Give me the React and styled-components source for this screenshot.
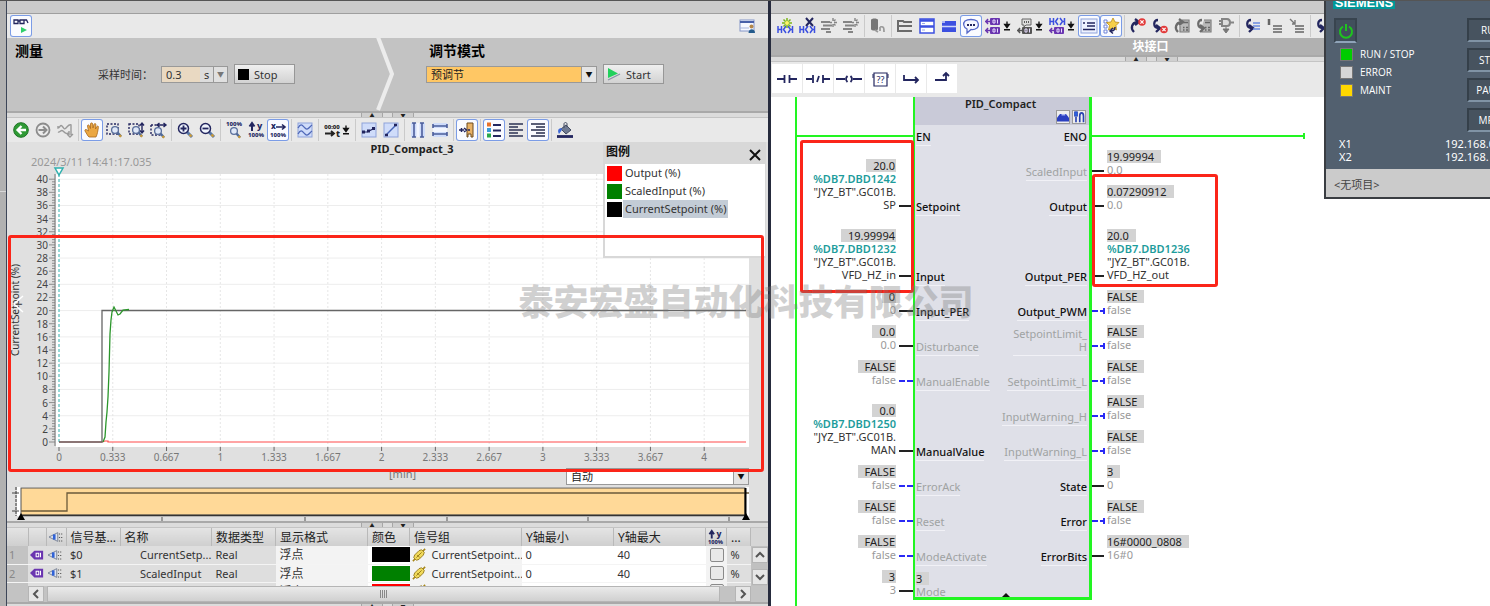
import React from 'react'
import styled, { createGlobalStyle, css } from 'styled-components'

const NAVY = '#23265f'
const GREY = '#858585'
const BLUE = '#3c50e0'
const PURPLE = '#6a35b0'

/* ---------- toolbar icons ---------- */

const Magnifier = ({ x = 8, y = 8 }) => (
  <g>
    <path d={`M${x + 2.5} ${y + 2.5}l3.5 4`} stroke="#4e6a9a" strokeWidth="2.4" />
    <path d={`M${x + 4.5} ${y + 5}l1.6 1.8`} stroke="#c99a3a" strokeWidth="2.2" />
    <circle cx={x} cy={y} r="3.4" fill="#dfe8f8" stroke="#5a6f9c" strokeWidth="1.3" />
  </g>
)
const Contact = ({ color = BLUE, y = 0 }) => (
  <path d={`M1 ${8 + y}v7M1 ${11.5 + y}h3M4.500 ${8 + y}v7M9 ${8 + y}l-2.500 3.500l2.500 3.500M11 ${8 + y}l2.500 3.500l-2.500 3.500M13 ${11.5 + y}h2M15.500 ${8 + y}v7`} stroke={color} strokeWidth="1.5" fill="none" />
)
const Percent = ({ y = 15 }) => (
  <text x="8" y={y} fontSize="6" fontWeight="800" fill={NAVY} textAnchor="middle">100%</text>
)
const GreyList = ({ x = 6, y = 7 }) => (
  <path d={`M${x} ${y}h9M${x} ${y + 3}h9M${x} ${y + 6}h9`} stroke={GREY} strokeWidth="1.8" />
)
const Hook = ({ color = NAVY, up }) => (
  <path d={up ? 'M4 14C0 10 2 5 7 4M5 1l4 3-4 3' : 'M6 2C1 2 1 9 6 10M4 7l4 3-4 4'} stroke={color} strokeWidth="2.3" fill="none" />
)
const Device = () => (
  <g>
    <path d="M8 2h7v12H6V8" fill="#b9b9b9" stroke="#7d7d7d" strokeWidth="1.2" />
    <path d="M9 4.5h5M9 12h1.5M12 12h2M9 9.500h1.5M12 9.500h2" stroke="#666" strokeWidth="1.4" />
  </g>
)
const CrossBadge = ({ x, y }) => (
  <g>
    <circle cx={x} cy={y} r="3.8" fill="#e23a3a" />
    <path d={`M${x - 1.6} ${y - 1.6}l3.2 3.2M${x + 1.6} ${y - 1.6}l-3.2 3.2`} stroke="#fff" strokeWidth="1.2" />
  </g>
)
const Block = ({ x = 5, y, color = PURPLE }) => (
  <g>
    <rect x={x} y={y} width="10" height="7" rx="1" fill={color} />
    <path d={`M0 ${y + 3.5}h5M3 ${y + 1}L1 ${y + 3.5}l2 2.500`} stroke={color} strokeWidth="1.5" fill="none" />
    <path d={`M${x + 3} ${y + 2}h2v3h-2zM${x + 7.5} ${y + 1.5}v4`} stroke="#e8dcff" strokeWidth="1" fill="none" />
  </g>
)
const Tile = () => <rect x="1" y="1" width="14" height="14" fill="#cfdcfa" stroke="#8fa3da" />

const icons = {
  glasses: (
    <g fill="none">
      <path d="M1 2h4v3.500H1zM7 2h4v3.500H7zM5 3h2M11 2h2.500l1.500 3" stroke={NAVY} strokeWidth="1.3" />
      <path d="M8 9l6 3-6 3z" fill="#2fcf6a" />
    </g>
  ),
  layout: (
    <g>
      <rect x="1" y="2" width="14" height="11" fill="#f6f8ff" stroke="#8496c8" />
      <path d="M1 4h14" stroke="#4860a8" strokeWidth="2" />
      <path d="M1 10h9" stroke="#a8b5dc" />
      <circle cx="12.500" cy="8.500" r="2" fill="#b5884a" />
      <path d="M9.500 15c0-5 6.500-5 6.500 0z" fill="#245b8c" />
    </g>
  ),
  back: (
    <g>
      <circle cx="8" cy="8" r="7.300" fill="#2f9a35" stroke="#1d7424" />
      <path d="M13 8H5M8.500 4L4.500 8l4 4" stroke="#fff" strokeWidth="2.300" fill="none" />
    </g>
  ),
  forward: (
    <g>
      <circle cx="8" cy="8" r="6.500" fill="#ececec" stroke="#8c8c8c" strokeWidth="1.800" />
      <path d="M3.500 8h8M8 4.500L11.500 8 8 11.500" stroke="#8c8c8c" strokeWidth="2" fill="none" />
    </g>
  ),
  curve: (
    <g fill="none" stroke="#999" strokeWidth="1.400">
      <path d="M1 4v2c2 0 2-4 4-2s2 4 4 2 3-4 5-3v6" />
      <path d="M1 10c2 1 3-3 5-1s3 3 6 2M12 9v4M14 9v4M10 12l3 3 3-3" />
    </g>
  ),
  hand: (
    <path d="M4 14L1 9c-.6-1.600 1-2 2-1l1.500 1L3.500 4c0-1.500 1.500-1.500 2 0l1 2.500L6.500 2c0-1.500 2-1.500 2.200 0L9 6l1-3.600c.5-1.400 2-1 1.900.4L11.500 7l1.200-2.300c.8-1.200 2-.6 1.700.7C13.800 9 13.500 12 12 15H5z" fill="#eba742" stroke="#a8681c" strokeWidth=".8" />
  ),
  zoomArea: (
    <g>
      <rect x="1" y="2" width="11" height="10" fill="none" stroke={NAVY} strokeWidth="1.400" strokeDasharray="2 1.500" />
      <Magnifier x={9} y={8} />
    </g>
  ),
  zoomV: (
    <g>
      <rect x="1" y="2" width="10" height="10" fill="none" stroke={NAVY} strokeWidth="1.400" strokeDasharray="2 1.500" />
      <path d="M14 1v10M12 3.500L14 1l2 2.500M12 8.500l2 2.500 2-2.500" stroke={NAVY} strokeWidth="1.400" fill="none" />
      <Magnifier x={8} y={8} />
    </g>
  ),
  zoomH: (
    <g>
      <path d="M1 3v10h10M1 3h6" fill="none" stroke={NAVY} strokeWidth="1.400" strokeDasharray="2 1.500" />
      <path d="M7 3h9M9.500 1L7 3l2.500 2M13.500 1L16 3l-2.500 2" stroke={NAVY} strokeWidth="1.400" fill="none" />
      <Magnifier x={8} y={9} />
    </g>
  ),
  zoomIn: (
    <g>
      <path d="M10 10l5 5" stroke="#5878a8" strokeWidth="3" />
      <path d="M12.500 12.500l2 2" stroke="#c99a3a" strokeWidth="2.400" />
      <circle cx="6.500" cy="6.500" r="5" fill="#eef3fc" stroke={NAVY} strokeWidth="1.500" />
      <path d="M3.500 6.500h6M6.500 3.500v6" stroke={NAVY} strokeWidth="1.800" />
    </g>
  ),
  zoomOut: (
    <g>
      <path d="M10 10l5 5" stroke="#5878a8" strokeWidth="3" />
      <path d="M12.500 12.500l2 2" stroke="#c99a3a" strokeWidth="2.400" />
      <circle cx="6.500" cy="6.500" r="5" fill="#eef3fc" stroke={NAVY} strokeWidth="1.500" />
      <path d="M3.500 6.500h6" stroke={NAVY} strokeWidth="1.800" />
    </g>
  ),
  zoomFull: (
    <g>
      <Magnifier x={8} y={9} />
      <Percent y={4} />
    </g>
  ),
  yFull: (
    <g>
      <path d="M4 9V2M1.500 4.500L4 1l2.500 3.500" stroke={NAVY} strokeWidth="2" fill="none" />
      <text x="9" y="7" fontSize="9" fontWeight="800" fill={NAVY}>y</text>
      <Percent y={15} />
    </g>
  ),
  xFull: (
    <g>
      <text x="1" y="7" fontSize="8" fontWeight="800" fill={NAVY}>x</text>
      <path d="M6 5h9M12 2.500L15 5l-3 2.500" stroke={NAVY} strokeWidth="1.600" fill="none" />
      <Percent y={15} />
    </g>
  ),
  waves: (
    <g>
      <Tile />
      <path d="M1 6c3-5 4-3 7 0s4-1 7-3M1 12c3-5 4-3 7 0s4-1 7-3" stroke="#4f68b8" strokeWidth="1.300" fill="none" />
    </g>
  ),
  time: (
    <g>
      <text x="8" y="7" fontSize="6" fontWeight="800" fill="#222" textAnchor="middle">00:00</text>
      <path d="M1 11.500h8M7 9l3 2.500L7 14" stroke="#222" strokeWidth="1.800" fill="none" />
      <text x="12" y="15" fontSize="9" fontWeight="800" fill="#222">t</text>
    </g>
  ),
  points: (
    <g>
      <Tile />
      <path d="M2 10h4l4-2 4-2" stroke={NAVY} strokeWidth="1.200" fill="none" />
      <path d="M1 10h3M6 9h3M11 6.500h3" stroke={NAVY} strokeWidth="2.800" />
    </g>
  ),
  line: (
    <g>
      <Tile />
      <path d="M3 13L13 3" stroke="#4764b8" strokeWidth="1.500" />
      <path d="M2 13h3M11 3h3" stroke={NAVY} strokeWidth="2.500" />
    </g>
  ),
  vBars: (
    <g>
      <rect x="1" y="1" width="14" height="14" fill="#cfdcfa" />
      <path d="M4 1v14M12 1v14M2 1h4M2 15h4M10 1h4M10 15h4" stroke="#4b5d9c" strokeWidth="1.600" />
      <path d="M8 1v14" stroke="#f2f5fd" strokeWidth="3" />
    </g>
  ),
  hBars: (
    <g>
      <rect x="1" y="1" width="14" height="14" fill="#cfdcfa" />
      <path d="M1 8h14" stroke="#f2f5fd" strokeWidth="4" />
      <path d="M1 4h14M1 12h14M1 2v4M15 2v4M1 10v4M15 10v4" stroke="#4b5d9c" strokeWidth="1.600" />
    </g>
  ),
  dock: (
    <g>
      <path d="M8 1h6v14h-2v-3H9v3H8z" fill="#e8b266" stroke="#6d4a1e" />
      <path d="M0 8h5M2.500 6v4M5 6l2.500 2L5 10M9 8h2" stroke={NAVY} strokeWidth="1.500" fill="none" />
    </g>
  ),
  legend: (
    <g>
      <path d="M1 0.500h4v4H1z" fill="#e8722a" />
      <path d="M1 6h4v4H1z" fill="#3a9ad8" />
      <path d="M1 11.500h4v4H1z" fill="#2aa84a" />
      <path d="M7 3h8M7 8.500h8M7 14h8" stroke={NAVY} strokeWidth="2.200" />
    </g>
  ),
  alignLeft: <path d="M1 2h14M1 5h9M1 8h14M1 11h9M1 14h14" stroke="#5a5f78" strokeWidth="1.800" />,
  alignRight: <path d="M1 2h14M6 5h9M1 8h14M6 11h9M1 14h14" stroke="#5a5f78" strokeWidth="1.800" />,
  paint: (
    <g>
      <path d="M0 14.500h16" stroke={NAVY} strokeWidth="2.800" />
      <path d="M4 7l5-4 5 5-5 4z" fill="#6f7a92" stroke="#444c62" />
      <path d="M7 6V2c0-2 3-2 3 0v3" stroke="#444c62" fill="none" />
      <path d="M4 6c-4 1-3 4-2 6 1-2 3-3 3-5z" fill="#3d68d8" />
    </g>
  ),
  newNet: (
    <g>
      <Contact />
      <path d="M10 0v10M5 5h10M6.500 1.500l7 7M13.500 1.500l-7 7" stroke="#7bb518" strokeWidth="1.500" />
      <circle cx="10" cy="5" r="2" fill="#fff36b" />
    </g>
  ),
  delNet: (
    <g>
      <Contact />
      <path d="M7 0l7 8M14 0L7 8" stroke={NAVY} strokeWidth="2" />
    </g>
  ),
  greyRows: (
    <g>
      <path d="M0 4h9M2 7.500h9M0 11h9M5 14h5" stroke={GREY} strokeWidth="2" />
      <path d="M12 0v3M12 6v3M9 4.500h2M13 4.500h3M14.500 1.500l-1.500 1.500M14.500 7.500L13 6" stroke={GREY} strokeWidth="1.400" />
    </g>
  ),
  tank: (
    <g>
      <path d="M1 2c0-2 7-2 7 0v9c0 2-7 2-7 0z" fill="#777" />
      <path d="M10 9v4M10 9c4-1 4 1 4 5M5 12l3 2" stroke="#999" strokeWidth="1.700" fill="none" />
    </g>
  ),
  tree: <path d="M0 3h6l1 1h8M0 8h15M0 13h15M1 2v12" stroke="#6b6b6b" strokeWidth="2" fill="none" />,
  network: (
    <g>
      <rect x="1" y="1" width="14" height="14" fill="#fff" stroke={BLUE} strokeWidth="1.500" />
      <path d="M1 2.500h14M1 8.500h14" stroke={BLUE} strokeWidth="2.500" />
      <path d="M3 5.500h3M3 12h3" stroke="#9aa7ea" />
    </g>
  ),
  networkFull: (
    <g>
      <rect x="1" y="3" width="14" height="11" fill={BLUE} />
      <path d="M1 4h3M1 8.500h14" stroke="#cfd6fa" strokeWidth="1.400" />
    </g>
  ),
  comment: (
    <g>
      <path d="M2 3c3-2 9-2 12 0 2 3 2 5 0 7-2 1.500-4 2-6 1.500L4 15v-4C0 9 0 5 2 3z" fill="#f5f7ff" stroke="#5668c8" strokeWidth="1.300" />
      <path d="M4 7h2M7 7h2M10 7h2" stroke={NAVY} strokeWidth="1.800" />
    </g>
  ),
  operands: (
    <g>
      <Block y={0} />
      <Block y={9} />
    </g>
  ),
  tagComment: (
    <g>
      <Block y={9} color="#555" />
      <path d="M5 1h9v6H9l-2 2V7H5z" fill="#ddd" stroke="#666" />
      <path d="M7 4h1M9 4h1M11 4h1" stroke="#333" strokeWidth="1.500" />
    </g>
  ),
  netBlock: (
    <g>
      <Contact y={-8} />
      <Block y={9} />
    </g>
  ),
  caret: <path d="M4 2v7M1 6l3 4 3-4zM0 13h8" stroke="#111" strokeWidth="1.800" fill="#111" />,
  indent: (
    <g>
      <rect x="0" y="1" width="16" height="14" fill="#eef2ff" stroke="#8fa3da" />
      <path d="M2 5h2M6 5h8M6 8h8M2 11.500h12" stroke={NAVY} strokeWidth="1.700" />
    </g>
  ),
  favorites: (
    <g>
      <path d="M1 2h3v3H1zM1 7h3v3H1zM1 12h3v3H1z" fill="#fff" stroke="#6c82d8" />
      <path d="M10 0l2 4 4 .5-3 3 .5 4.500-4-2-4 2 1-4.500-3-3 4.500-.5z" fill="#f6cf4a" stroke="#b98a1a" strokeWidth=".8" />
      <path d="M12 9c0 3-1 4-4 4M10 10l-3 3 3 2.500" stroke={NAVY} strokeWidth="1.500" fill="none" />
    </g>
  ),
  goUp: <g><Hook up /><CrossBadge x={12} y={4} /></g>,
  goDown: <g><Hook /><CrossBadge x={12} y={11.5} /></g>,
  devUp: <g><Device /><Hook up color="#6b6b6b" /></g>,
  devDown: <g><Device /><Hook color="#6b6b6b" /></g>,
  gate: (
    <g>
      <path d="M4 1h5c4 0 4 7 0 7H4zM1 3h3M1 6h3M12 4.500h4" fill="#ddd" stroke={GREY} strokeWidth="2" />
      <path d="M8 9v4M5 11l3 4 3-4z" stroke="#777" fill="#777" />
    </g>
  ),
  stepBlue: (
    <g>
      <Hook />
      <path d="M8 5h7M8 8h7M8 11h7" stroke="#6a8ae0" strokeWidth="1.700" />
    </g>
  ),
  stepGrey: <g><path d="M2 1v6" stroke="#666" strokeWidth="2.500" /><GreyList x={6} y={8} /></g>,
  stepOut: <g><path d="M1 1l5 5M3 6h3V2" stroke="#777" strokeWidth="1.400" fill="none" /><GreyList x={6} y={8} /></g>,
  eye: (
    <g>
      <path d="M0 8l10-5v10z" fill="#dfe4ee" stroke="#707a90" />
      <path d="M6 5v6" stroke="#2f62d8" strokeWidth="3" />
      <path d="M12 4v1M12 8v1M12 12v1M14.500 4v1M14.500 8v1M14.500 12v1" stroke="#555" strokeWidth="1.300" />
    </g>
  ),
  tag: (
    <g>
      <path d="M0 8l5-5h10v10H5z" fill={PURPLE} />
      <path d="M7 6h3v4H7zM12 5.500v5" stroke="#fff" strokeWidth="1.200" fill="none" />
    </g>
  ),
  link: (
    <g fill="none">
      <path d="M1 15l3-3M12 4l3-3" stroke="#a88718" strokeWidth="1.800" />
      <path d="M3 8l5-5 3-1 3 3-1 3-5 5-3 1-3-3z" fill="#f1da5a" stroke="#8f7215" />
      <path d="M5 11l6-6M6 8l3 3" stroke="#8f7215" />
    </g>
  ),
  toolbox: (
    <g>
      <path d="M0 9l4-5h8l4 5v5H0z" fill="#2a3fc0" />
      <path d="M6 5h5" stroke="#b6c2f8" strokeWidth="1.800" />
    </g>
  ),
  wrench: (
    <g>
      <path d="M2 1h4v6H2z" fill="#2a62e0" stroke="#2a42b0" />
      <path d="M4 8v7M9 15V7c0-6 5-6 5 0v8" stroke="#2a42b0" strokeWidth="2.200" fill="none" />
    </g>
  ),
  power: (
    <g fill="none" stroke="#1fc41f" strokeWidth="2">
      <path d="M5 3.500a6 6 0 1 0 6 0M8 1v7" />
    </g>
  ),
}

const Icon = ({ name, size = 16, width }) => (
  <svg width={width || size} height={size} viewBox={`0 0 ${name === 'caret' ? 8 : 16} 16`} aria-hidden="true">
    {icons[name]}
  </svg>
)

/* ---------- data ---------- */

const chartTools = [
  'back', 'forward', 'curve', '|', '*hand', 'zoomArea', 'zoomV', 'zoomH', '|', 'zoomIn', 'zoomOut', '|',
  'zoomFull', 'yFull', '*xFull', '|', 'waves', '|', '+time', '|', 'points', 'line', '|', 'vBars', 'hBars', '|',
  '*dock', '|', '*legend', 'alignLeft', '*alignRight', '|', 'paint',
]
const editorTools = [
  'newNet', 'delNet', 'greyRows', 'greyRows', '|', 'tank', '|', 'tree', 'network', 'networkFull', '*comment',
  '+operands', '+tagComment', '+netBlock', '*indent', '*favorites', '|', 'goUp', 'goDown', 'devUp', 'devDown',
  'gate', '|', 'stepBlue', 'stepGrey', 'stepOut', '|', 'stepBlue',
]

const legend = [
  { color: '#ff0000', label: 'Output (%)' },
  { color: '#008000', label: 'ScaledInput (%)' },
  { color: '#000000', label: 'CurrentSetpoint (%)', selected: true },
]

const signals = [
  { no: 1, base: '$0', name: 'CurrentSetp...', color: '#000000' },
  { no: 2, base: '$1', name: 'ScaledInput', color: '#008000' },
  { no: 3, base: '$2', name: 'Output', color: '#ff0000' },
]

const inputs = [
  { name: 'EN', power: true, on: true },
  { name: 'Setpoint', tall: true, on: true, value: '20.0', address: '%DB7.DBD1242', tag: ['"JYZ_BT".GC01B.', 'SP'] },
  { name: 'Input', tall: true, on: true, value: '19.99994', address: '%DB7.DBD1232', tag: ['"JYZ_BT".GC01B.', 'VFD_HZ_in'] },
  { name: 'Input_PER', on: true, value: '0', initial: '0' },
  { name: 'Disturbance', value: '0.0', initial: '0.0' },
  { name: 'ManualEnable', value: 'FALSE', initial: 'false', bool: true },
  { name: 'ManualValue', tall: true, on: true, value: '0.0', address: '%DB7.DBD1250', tag: ['"JYZ_BT".GC01B.', 'MAN'] },
  { name: 'ErrorAck', value: 'FALSE', initial: 'false', bool: true },
  { name: 'Reset', value: 'FALSE', initial: 'false', bool: true },
  { name: 'ModeActivate', value: 'FALSE', initial: 'false', bool: true },
  { name: 'Mode', value: '3', initial: '3', inner: '3' },
]
const outputs = [
  { name: 'ENO', power: true, on: true },
  { name: 'ScaledInput', value: '19.99994', initial: '0.0' },
  { name: 'Output', on: true, value: '0.07290912', initial: '0.0' },
  { name: 'Output_PER', tall: true, on: true, value: '20.0', address: '%DB7.DBD1236', tag: ['"JYZ_BT".GC01B.', 'VFD_HZ_out'] },
  { name: 'Output_PWM', on: true, value: 'FALSE', initial: 'false', bool: true },
  { name: 'SetpointLimit_\nH', value: 'FALSE', initial: 'false', bool: true },
  { name: 'SetpointLimit_L', value: 'FALSE', initial: 'false', bool: true },
  { name: 'InputWarning_H', value: 'FALSE', initial: 'false', bool: true },
  { name: 'InputWarning_L', value: 'FALSE', initial: 'false', bool: true },
  { name: 'State', on: true, value: '3', initial: '0' },
  { name: 'Error', on: true, value: 'FALSE', initial: 'false', bool: true },
  { name: 'ErrorBits', on: true, value: '16#0000_0808', initial: '16#0' },
]

const ladder = [
  { label: 'normally open contact', d: 'M1 8h7M8.500 4v8M13.500 4v8M14 8h7' },
  { label: 'normally closed contact', d: 'M-1 8h6M6 4v8M16 4v8M16 8h7M10 11l2-6' },
  { label: 'assignment', d: 'M-2 8h9M9.500 5q-3 3 0 6M12.500 5q3 3 0 6M15 8h9' },
  { label: 'empty box', d: 'M5 2h13v13H5zM3 4h2M18 4h2M3 6h2M18 6h2', text: '??' },
  { label: 'open branch', d: 'M4 4v5h14M15 6l3 3-3 3' },
  { label: 'close branch', d: 'M4 9h11V3M12 5l3-3 3 3' },
]

/* ---------- pieces ---------- */

const Toolbar = ({ items }) => (
  <ToolRow>
    {items.map((item, i) => {
      if (item === '|') return <Separator key={i} />
      const name = item.replace(/[*+]/, '')
      return (
        <ToolButton key={i} aria-label={name} $active={item[0] === '*'} $wide={item[0] === '+'}>
          <Icon name={name} />
          {item[0] === '+' && <Icon name="caret" size={12} width={8} />}
        </ToolButton>
      )
    })}
  </ToolRow>
)

const Splitter = ({ offset }) => (
  <SplitterBar $offset={offset}>
    <SplitterGrip aria-label="collapse up">▲</SplitterGrip>
    <SplitterGrip aria-label="collapse down">▼</SplitterGrip>
  </SplitterBar>
)

// 0..40 % over 263px, one minute is 161px wide
const yPos = (v) => 268 - v * 6.57
const xPos = (v) => 52 + v * 161.3

const TrendChart = () => {
  const xTicks = ['0', '0.333', '0.667', '1', '1.333', '1.667', '2', '2.333', '2.667', '3', '3.333', '3.667', '4']
  return (
    <ChartSvg viewBox="0 0 761 294">
      <rect x="49" y="0" width="693" height="273" fill="#fff" />
      {[4, 8, 12, 16, 20, 24, 28, 32, 36, 40].map((v) => (
        <path key={v} d={`M52 ${yPos(v)}H742`} stroke="#ededed" />
      ))}
      {xTicks.map((t, i) => (
        <g key={t}>
          {i > 0 && <path d={`M${xPos(i / 3)} 0V273`} stroke="#e6e6e6" strokeDasharray="2 2" />}
          <path d={`M${xPos(i / 3)} 273v4`} stroke="#666" />
          <text x={xPos(i / 3)} y="287" textAnchor="middle" fill="#777">{t}</text>
        </g>
      ))}
      {Array.from({ length: 101 }, (_, i) => (
        <path key={i} d={`M${i % 5 ? 45 : 42} ${yPos(i * 0.4)}H48`} stroke="#777" strokeWidth=".8" />
      ))}
      <path d="M48 0V272" stroke="#777" />
      {Array.from({ length: 21 }, (_, i) => (
        <text key={i} x="41" y={yPos(i * 2) + 4} textAnchor="end" fill="#444">{i * 2}</text>
      ))}
      <text transform="translate(12 136) rotate(-90)" textAnchor="middle" fill="#333">CurrentSetpoint (%)</text>
      <path d="M52 0V268" stroke="#2fb0ae" strokeDasharray="3 2" />
      <path d="M48-6h8l-4 7z" fill="#fff" stroke="#2fb0ae" strokeWidth="1.500" />
      <path d="M52 268h43l3-1h3v1h638" stroke="#ff4a4a" strokeWidth="1.200" fill="none" />
      <path d="M52 268h43V136.500h644" stroke="#666" strokeWidth="1.300" fill="none" />
      <path d="M96 268l2-5 1-15 1-10 1-15 1-25 1-38 1-14 1-8 2-5 4 8 2-1 3-4 6-.5" stroke="#2b962b" strokeWidth="1.300" fill="none" />
    </ChartSvg>
  )
}

const Overview = () => (
  <ChartSvg viewBox="0 0 761 37">
    <rect x="10" y="3" width="732" height="29" fill="#fff" />
    <path d="M9 3v29" stroke="#333" strokeDasharray="3 1" />
    <path d="M5 9h7M5 27h7" stroke="#444" />
    <rect x="14" y="4" width="724" height="27" fill="#ffd998" stroke="#555" />
    {[155, 298, 440, 581, 722].map((x) => (
      <path key={x} d={`M${x} 33v4`} stroke="#555" />
    ))}
    <path d="M14 27h46V9h682" stroke="#6b5a3a" strokeWidth="1.300" fill="none" />
    <path d="M14 31.500h724" stroke="#333" strokeWidth="1.500" />
    <path d="M738.500 4v30" stroke="#000" strokeWidth="2" />
    <path d="M10 36l4-7 4 7zM735 36l4-7 4 7z" fill="#000" />
  </ChartSvg>
)

const Pin = ({ pin, side }) => {
  if (pin.power) {
    return (
      <PinRow $side={side}>
        <PowerWire $side={side} />
      </PinRow>
    )
  }
  return (
    <PinRow $tall={pin.tall} $side={side}>
      <PinText $side={side}>
        <Monitor $side={side}>{pin.value}</Monitor>
        {pin.address && <Address>{pin.address}</Address>}
        {pin.tag && pin.tag.map((t) => <Operand key={t}>{t}</Operand>)}
        {pin.initial && <Initial>{pin.initial}</Initial>}
      </PinText>
      <Wire $bool={pin.bool} $side={side} />
    </PinRow>
  )
}

const PinName = ({ pin, side }) => (
  <NameRow $tall={pin.tall} $side={side} $first={pin.power}>
    {pin.inner && <Monitor>{pin.inner}</Monitor>}
    <Name $on={pin.on} $side={side}>{pin.name}</Name>
  </NameRow>
)

const App = () => {
  return (
    <Page>
      <GlobalStyle />
      <SideStrip />
      <CommissioningPanel>
        <TitleBar />
        <ActionBar>
          <ToolButton $active aria-label="monitor"><Icon name="glasses" /></ToolButton>
          <ToolButton aria-label="save layout"><Icon name="layout" /></ToolButton>
        </ActionBar>
        <Controls>
          <ControlGroup>
            <GroupTitle>测量</GroupTitle>
            <ControlRow $indent>
              <label htmlFor="sampling">采样时间：</label>
              <SampleField>
                <input id="sampling" defaultValue="0.3" />
                <span>s</span>
                <button aria-label="choose time">▼</button>
              </SampleField>
              <CommandButton>
                <StopMark />
                Stop
              </CommandButton>
            </ControlRow>
          </ControlGroup>
          <Chevron viewBox="0 0 26 73" aria-hidden="true">
            <path d="M3-1l14 37L3 72" stroke="#ececec" strokeWidth="4" fill="none" />
          </Chevron>
          <ControlGroup $fill>
            <GroupTitle>调节模式</GroupTitle>
            <ControlRow>
              <SelectBox $mode>
                <select aria-label="调节模式">
                  <option>预调节</option>
                </select>
              </SelectBox>
              <CommandButton>
                <svg width="14" height="14" viewBox="0 0 14 14" aria-hidden="true">
                  <path d="M1 1l10 5.500L1 11z" fill="#22d05c" />
                  <path d="M1 13l12-6" stroke="#8a94a8" strokeWidth="1.300" />
                </svg>
                Start
              </CommandButton>
            </ControlRow>
          </ControlGroup>
        </Controls>
        <Splitter offset={354} />
        <Toolbar items={chartTools} />
        <ChartArea>
          <ChartHead>
            <ChartTitle>PID_Compact_3</ChartTitle>
            <TimeStamp>2024/3/11 14:41:17.035</TimeStamp>
          </ChartHead>
          <TrendChart />
          <AxisFooter>
            <AxisUnit>[min]</AxisUnit>
            <SelectBox>
              <select aria-label="scaling">
                <option>自动</option>
              </select>
            </SelectBox>
          </AxisFooter>
          <Overview />
          <Legend>
            <LegendHead>
              图例
              <button aria-label="close">
                <svg width="12" height="12" viewBox="0 0 12 12">
                  <path d="M1 1l10 10M11 1L1 11" stroke="#111" strokeWidth="2" />
                </svg>
              </button>
            </LegendHead>
            <LegendList>
              {legend.map((item) => (
                <LegendItem key={item.label} $color={item.color} $selected={item.selected}>
                  <span>{item.label}</span>
                </LegendItem>
              ))}
            </LegendList>
          </Legend>
          <Highlight $top={93} $left={1} $right={4} $height={237} />
          <PrevArrow viewBox="0 0 12 18" aria-hidden="true">
            <path d="M11 1L2 9l9 8" stroke="#fff" strokeWidth="1.500" fill="none" />
          </PrevArrow>
        </ChartArea>
        <Splitter offset={354} />
        <TableArea>
          <TableClip>
            <SignalTable>
              <colgroup>
                {[21, 18, 20, 54, null, 64, 92, 42, 112, 92, 92, 21, 24].map((w, i) => (
                  <col key={i} width={w || undefined} />
                ))}
              </colgroup>
              <thead>
                <tr>
                  <th />
                  <th />
                  <th><Icon name="eye" size={14} /></th>
                  <th>信号基…</th>
                  <th>名称</th>
                  <th>数据类型</th>
                  <th>显示格式</th>
                  <th>颜色</th>
                  <th>信号组</th>
                  <th>Y轴最小</th>
                  <th>Y轴最大</th>
                  <th><Icon name="yFull" size={15} /></th>
                  <th>...</th>
                </tr>
              </thead>
              <tbody>
                {signals.map((s) => (
                  <tr key={s.no}>
                    <RowNo>{s.no}</RowNo>
                    <td><Icon name="tag" size={14} /></td>
                    <td><Icon name="eye" size={14} /></td>
                    <td>{s.base}</td>
                    <NameCell>{s.name}</NameCell>
                    <td>Real</td>
                    <EditCell $cjk>浮点</EditCell>
                    <ColorCell $color={s.color}><div /></ColorCell>
                    <EditCell>
                      <GroupLabel><Icon name="link" size={14} />CurrentSetpoint...</GroupLabel>
                    </EditCell>
                    <EditCell $white>0</EditCell>
                    <EditCell $white>40</EditCell>
                    <EditCell><input type="checkbox" aria-label={`${s.name} 100%`} /></EditCell>
                    <td>%</td>
                  </tr>
                ))}
              </tbody>
            </SignalTable>
          </TableClip>
          <VScroll>
            <ScrollButton aria-label="scroll up"><svg viewBox="0 0 10 10"><path d="M1 7l4-4 4 4" /></svg></ScrollButton>
            <ScrollButton aria-label="scroll down"><svg viewBox="0 0 10 10"><path d="M1 3l4 4 4-4" /></svg></ScrollButton>
          </VScroll>
        </TableArea>
        <HScroll>
          <ScrollButton aria-label="scroll left"><svg viewBox="0 0 10 10"><path d="M7 1L3 5l4 4" /></svg></ScrollButton>
          <Thumb><i /><i /><i /><i /></Thumb>
          <ScrollButton aria-label="scroll right"><svg viewBox="0 0 10 10"><path d="M3 1l4 4-4 4" /></svg></ScrollButton>
        </HScroll>
        <Splitter offset={354} />
      </CommissioningPanel>

      <EditorPanel>
        <TitleBar />
        <Toolbar items={editorTools} />
        <InterfaceBar>块接口</InterfaceBar>
        <Splitter offset={354} />
        <Palette>
          {ladder.map((item) => (
            <PaletteButton key={item.label} aria-label={item.label}>
              <svg width="24" height="16" viewBox="-1 0 24 16">
                <path d={item.d} stroke={NAVY} strokeWidth={item.text ? 1.2 : 1.8} fill="none" />
                {item.text && <text x="11.5" y="12" fontSize="9" fill={NAVY} textAnchor="middle">{item.text}</text>}
              </svg>
            </PaletteButton>
          ))}
        </Palette>
        <Diagram>
          <Pins $side="left">
            {inputs.map((p) => <Pin key={p.name} pin={p} side="left" />)}
          </Pins>
          <FunctionBlock>
            <BlockHead>
              <h3>PID_Compact</h3>
              <div>
                <BlockButton aria-label="configuration"><Icon name="toolbox" size={12} /></BlockButton>
                <BlockButton aria-label="commissioning"><Icon name="wrench" size={12} /></BlockButton>
              </div>
            </BlockHead>
            <BlockBody>
              <div>{inputs.map((p) => <PinName key={p.name} pin={p} side="left" />)}</div>
              <div>{outputs.map((p) => <PinName key={p.name} pin={p} side="right" />)}</div>
              <BlockFold />
            </BlockBody>
          </FunctionBlock>
          <Pins $side="right">
            {outputs.map((p) => <Pin key={p.name} pin={p} side="right" />)}
          </Pins>
          <Highlight $top={43} $left={29} $width={114} $height={153} />
          <Highlight $top={77} $left={321} $width={126} $height={113} />
        </Diagram>
      </EditorPanel>

      <PlcWindow>
        <PlcFace>
          <Brand>SIEMENS</Brand>
          <PlcTop>
            <div>
              <PowerButton aria-label="power"><Icon name="power" /></PowerButton>
              <Led $color="#00cc00">RUN / STOP</Led>
              <Led $color="#d6d6d6">ERROR</Led>
              <Led $color="#ffd800">MAINT</Led>
            </div>
            <PlcButtons>
              <button>RUN</button>
              <button>STOP</button>
              <button>PAUSE</button>
              <button>MRES</button>
            </PlcButtons>
          </PlcTop>
          <PlcAddress><span>X1</span><span>192.168.0</span></PlcAddress>
          <PlcAddress><span>X2</span><span>192.168.</span></PlcAddress>
        </PlcFace>
        <PlcProject>&lt;无项目&gt;</PlcProject>
      </PlcWindow>

      <Watermark>泰安宏盛自动化科技有限公司</Watermark>
    </Page>
  )
}

export default App

/* ---------- styles ---------- */

const GlobalStyle = createGlobalStyle`
  * {
    box-sizing: border-box;
  }
  body {
    margin: 0;
    background: #fff;
    color: #333;
    font-family: "Noto Sans", "Noto Sans CJK SC", sans-serif;
    font-size: 11px;
    line-height: 13px;
  }
  button, input, select {
    font: inherit;
    color: inherit;
    margin: 0;
    padding: 0;
    border: none;
    border-radius: 0;
  }
  svg {
    display: block;
    flex: none;
    overflow: visible;
  }
  h2, h3 {
    margin: 0;
  }
`
const Page = styled.main`
  position: relative;
  display: grid;
  grid-template-columns: 6px minmax(0, 765fr) minmax(0, 719fr);
  height: 100vh;
  overflow: hidden;
  border-top: 1px solid #555;
`
const SideStrip = styled.div`
  background: linear-gradient(#d8d8d8, #d8d8d8) 0 190px / 100% 1px no-repeat #b1b1b1;
`
const CommissioningPanel = styled.section`
  border-left: 1px solid #3d4658;
  border-right: 3px solid #262b3d;
  background: #e0e0e0;
`
const EditorPanel = styled.section`
  display: flex;
  flex-direction: column;
  background: #fff;
`
const TitleBar = styled.div`
  height: 13px;
  background: #cbcbcb;
  border-bottom: 1px solid #9f9f9f;
`
const ActionBar = styled.div`
  display: flex;
  justify-content: space-between;
  align-items: center;
  height: 24px;
  padding: 0 11px 0 4px;
  background: #e9e9e9;
`
const ToolRow = styled.div`
  display: flex;
  align-items: center;
  gap: 2px;
  height: 24px;
  padding-left: 4px;
  background: #e9e9e9;
  overflow: hidden;
`
const ToolButton = styled.button`
  display: flex;
  align-items: center;
  justify-content: center;
  gap: 2px;
  flex: none;
  width: ${(props) => (props.$wide ? '30px' : '20px')};
  height: 20px;
  background: ${(props) => (props.$active ? '#fafbff' : 'transparent')};
  box-shadow: ${(props) => (props.$active ? '0 0 0 1px #7b9ce6' : 'none')};
  border-radius: 2px;
`
const Separator = styled.span`
  flex: none;
  width: 3px;
  height: 22px;
  background: linear-gradient(#cacaca, #cacaca) 1px 0 / 1px 100% no-repeat;
`
const SplitterBar = styled.div`
  display: flex;
  gap: 9px;
  height: 7px;
  padding-left: ${(props) => props.$offset}px;
  background: #dcdcdc;
  border-top: 2px solid #a9a9a9;
  border-bottom: 1px solid #c4c4c4;
  overflow: hidden;
`
const SplitterGrip = styled.button`
  width: 22px;
  height: 5px;
  font-size: 5px;
  line-height: 5px;
  color: #222;
  background: #cfcfcf;
  border: 1px solid #a6a6a6;
  border-width: 0 1px;
`
const Controls = styled.div`
  display: flex;
  height: 73px;
  background: #c3c3c3;
`
const ControlGroup = styled.div`
  flex: ${(props) => (props.$fill ? '1' : '0 0 368px')};
  padding: 5px 8px;
`
const GroupTitle = styled.h2`
  font-size: 14px;
  line-height: 16px;
  color: #000;
`
const ControlRow = styled.div`
  display: flex;
  align-items: center;
  gap: 6px;
  margin-top: 5px;
  margin-left: ${(props) => (props.$indent ? '83px' : '-3px')};
  height: 20px;
  white-space: nowrap;
`
const Chevron = styled.svg`
  width: 26px;
  height: 73px;
  margin-right: 20px;
  overflow: hidden;
`
const SampleField = styled.div`
  display: flex;
  width: 67px;
  height: 17px;
  margin-left: 2px;
  border: 1px solid #999;
  background: #dcdcdc;
  input {
    width: 38px;
    padding-left: 4px;
    background: #e9d9c2;
  }
  span {
    width: 13px;
    padding-left: 4px;
    line-height: 15px;
  }
  button {
    flex: 1;
    border-left: 1px solid #999;
    font-size: 7px;
    color: #777;
    background: #e0e0e0;
  }
`
const CommandButton = styled.button`
  display: flex;
  align-items: center;
  gap: 5px;
  width: 61px;
  height: 20px;
  padding-left: 3px;
  background: linear-gradient(#efefef, #d2d2d2);
  border: 1px solid #979797;
`
const StopMark = styled.span`
  width: 11px;
  height: 11px;
  background: #000;
`
const SelectBox = styled.div`
  position: relative;
  width: ${(props) => (props.$mode ? '171px' : '183px')};
  height: 17px;
  border: 1px solid #999;
  select {
    display: block;
    appearance: none;
    width: 100%;
    height: 100%;
    padding-left: 4px;
    color: #222;
    background: ${(props) => (props.$mode ? '#ffc764' : '#fff')};
  }
  &::after {
    content: '▼';
    position: absolute;
    inset: 0 0 0 auto;
    width: 14px;
    font-size: 7px;
    line-height: 15px;
    text-align: center;
    color: #111;
    background: #e4e4e4;
    border-left: 1px solid #999;
    pointer-events: none;
  }
`
const ChartArea = styled.div`
  position: relative;
`
const ChartSvg = styled.svg`
  width: 100%;
  height: auto;
  font-size: 10px;
`
const ChartHead = styled.header`
  position: relative;
  height: 32px;
  padding-left: 24px;
`
const ChartTitle = styled.h3`
  font-size: 11px;
  margin-left: 25px;
  text-align: center;
  color: #222;
`
const TimeStamp = styled.div`
  color: #999;
`
const AxisFooter = styled.div`
  display: flex;
  justify-content: flex-end;
  height: 16px;
  padding-left: 22px;
  padding-right: 19px;
  line-height: 12px;
  color: #777;
`
const AxisUnit = styled.span`
  margin-right: auto;
  margin-left: 50%;
`
const Legend = styled.aside`
  position: absolute;
  top: 0;
  right: 2px;
  width: 163px;
  height: 116px;
  background: #fff;
  border: solid #d8d8d8;
  border-width: 0 1px 2px 2px;
`
const LegendHead = styled.div`
  display: flex;
  justify-content: space-between;
  padding: 3px 4px 4px 1px;
  height: 22px;
  font-size: 12px;
  font-weight: 700;
  color: #111;
  background: #d8d8d8;
  button {
    height: 12px;
    margin-top: 4px;
    background: none;
  }
`
const LegendList = styled.ul`
  margin: 0;
  padding: 0 2px;
  list-style: none;
`
const LegendItem = styled.li`
  display: flex;
  align-items: center;
  height: 18px;
  gap: 1px;
  &::before {
    content: '';
    width: 15px;
    height: 15px;
    background: ${(props) => props.$color};
  }
  span {
    padding: 0 2px;
    line-height: 18px;
    background: ${(props) => (props.$selected ? '#c3ccd6' : 'transparent')};
  }
`
const Highlight = styled.div`
  position: absolute;
  top: ${(props) => props.$top}px;
  left: ${(props) => props.$left}px;
  right: ${(props) => (props.$right ? `${props.$right}px` : 'auto')};
  width: ${(props) => (props.$width ? `${props.$width}px` : 'auto')};
  height: ${(props) => props.$height}px;
  border: 3px solid #fb2519;
  border-radius: 3px;
  pointer-events: none;
`
const PrevArrow = styled.svg`
  position: absolute;
  left: 5px;
  top: 153px;
  width: 12px;
  height: 18px;
`
const TableArea = styled.div`
  display: flex;
`
const TableClip = styled.div`
  flex: 1;
  height: 58px;
  overflow: hidden;
`
const SignalTable = styled.table`
  width: 100%;
  table-layout: fixed;
  border-collapse: collapse;
  th, td {
    height: 18px;
    padding: 0 0 0 4px;
    text-align: left;
    white-space: nowrap;
    overflow: hidden;
    font-weight: 400;
    background: #dedede;
    border-bottom: 1px solid #f4f4f4;
  }
  th {
    font-size: 12px;
    color: #222;
    background: linear-gradient(#e4e4e4, #cfcfcf);
    border-right: 1px solid #b9b9b9;
    border-bottom: none;
  }
  th:nth-child(-n+3), td:nth-child(-n+3), th:nth-child(12), td:nth-child(12) {
    padding: 0 2px;
  }
  input {
    display: block;
    appearance: none;
    width: 14px;
    height: 14px;
    margin-left: 2px;
    border: 1px solid #8a8a8a;
    border-radius: 2px;
    background: #e9e9e9;
  }
`
const RowNo = styled.td`
  && {
    padding-left: 4px;
    color: #888;
    background: #c3c3c3;
  }
`
const NameCell = styled.td`
  && {
    padding-left: 20px;
  }
`
const EditCell = styled.td`
  && {
    background: ${(props) => (props.$white ? '#fff' : '#f3f3f3')};
    font-size: ${(props) => (props.$cjk ? '12px' : '11px')};
  }
`
const ColorCell = styled.td`
  && {
    padding: 0 0 0 4px;
    background: #fff;
  }
  div {
    height: 15px;
    background: ${(props) => props.$color};
  }
`
const GroupLabel = styled.span`
  display: flex;
  align-items: center;
  gap: 6px;
  margin-left: -2px;
`
const VScroll = styled.div`
  display: flex;
  flex-direction: column;
  justify-content: space-between;
  width: 17px;
  padding: 19px 1px 1px;
  background: linear-gradient(#d6d6d6 18px, #c0c0c0 18px);
`
const ScrollButton = styled.button`
  display: flex;
  align-items: center;
  justify-content: center;
  width: 16px;
  height: 16px;
  background: #e6e6e6;
  border: 1px solid #b5b5b5;
  svg {
    width: 10px;
    height: 10px;
    fill: none;
    stroke: #555;
    stroke-width: 2;
  }
`
const HScroll = styled.div`
  display: flex;
  gap: 3px;
  height: 16px;
  padding: 0 17px 0 21px;
  background: #c3c3c3;
`
const Thumb = styled.div`
  display: flex;
  align-items: center;
  justify-content: center;
  gap: 1px;
  flex: 1;
  margin-right: 12px;
  background: linear-gradient(#eaeaea, #d0d0d0);
  border: 1px solid #b5b5b5;
  i {
    width: 1px;
    height: 8px;
    background: #888;
  }
`
const InterfaceBar = styled.div`
  height: 17px;
  padding-left: 40px;
  font-size: 12px;
  line-height: 17px;
  font-weight: 700;
  text-align: center;
  color: #fff;
  background: #b1b1b1;
`
const Palette = styled.div`
  display: flex;
  gap: 1px;
  height: 35px;
  padding: 2px 1px 4px;
  background: #e9e9e9;
`
const PaletteButton = styled.button`
  display: flex;
  align-items: center;
  justify-content: center;
  width: 30px;
  height: 29px;
  background: #fff;
`
const Diagram = styled.div`
  position: relative;
  display: flex;
  flex: 1;
  min-height: 0;
  padding-left: 24px;
`
const Pins = styled.div`
  padding-top: 10px;
  ${(props) => props.$side === 'left' && css`
    width: 118px;
    border-left: 2px solid #22f522;
  `}
`
const PinRow = styled.div`
  display: flex;
  flex-direction: ${(props) => (props.$side === 'left' ? 'row' : 'row-reverse')};
  justify-content: flex-end;
  align-items: flex-end;
  gap: 3px;
  height: ${(props) => (props.$tall ? '70px' : '35px')};
`
const PinText = styled.div`
  display: flex;
  flex-direction: column;
  align-items: ${(props) => (props.$side === 'left' ? 'flex-end' : 'flex-start')};
  padding-bottom: 1px;
  white-space: nowrap;
`
const Monitor = styled.span`
  height: 13px;
  padding: ${(props) => (props.$side === 'left' ? '0 1px 0 7px' : '0 7px 0 0')};
  color: #222;
  background: #d3d3d3;
`
const Address = styled.span`
  font-weight: 600;
  color: #1d9c9c;
`
const Operand = styled.span`
  color: #333;
`
const Initial = styled.span`
  color: #999;
`
const Wire = styled.span`
  flex: none;
  width: ${(props) => (props.$side === 'left' ? '14px' : '12px')};
  height: 2px;
  margin-bottom: 5px;
  background: #222;
  ${(props) => props.$bool && css`
    background: repeating-linear-gradient(90deg, #2a2af5 0 6px, #fff 6px 8px);
  `}
  ${(props) => props.$bool && props.$side === 'right' && css`
    width: 13px;
    height: 6px;
    margin-right: -1px;
    margin-bottom: 3px;
    background: repeating-linear-gradient(90deg, #2a2af5 0 6px, #fff 6px 8px) 0 2px / 100% 2px no-repeat;
    border-right: 2px solid #2a2af5;
  `}
`
const PowerWire = styled.span`
  flex: none;
  width: ${(props) => (props.$side === 'left' ? '116px' : '213px')};
  height: 2px;
  margin-bottom: 5px;
  background: #22f522;
  ${(props) => props.$side === 'right' && css`
    height: 6px;
    margin-bottom: 3px;
    background: linear-gradient(#22f522, #22f522) 0 2px / 100% 2px no-repeat;
    border-right: 2px solid #22f522;
  `}
`
const FunctionBlock = styled.section`
  align-self: flex-start;
  width: 179px;
  border: solid #22f522;
  border-width: 0 3px 3px 2px;
  background: #dfe0e8;
`
const BlockHead = styled.header`
  height: 28px;
  padding-right: 3px;
  background: #c9cad8;
  h3 {
    font-size: 11px;
    font-weight: 600;
    text-align: center;
    color: #222;
  }
  div {
    display: flex;
    justify-content: flex-end;
    gap: 2px;
  }
`
const BlockButton = styled.button`
  width: 14px;
  height: 14px;
  border: 1px solid #9a9a9a;
  background: #eee;
`
const BlockBody = styled.div`
  position: relative;
  display: flex;
  justify-content: space-between;
  height: 472px;
  overflow: hidden;
`
const NameRow = styled.div`
  display: flex;
  flex-direction: column;
  justify-content: flex-end;
  align-items: ${(props) => (props.$side === 'left' ? 'flex-start' : 'flex-end')};
  height: ${(props) => (props.$first ? 21 : props.$tall ? 70 : 35)}px;
  padding: 0 2px 0 1px;
`
const Name = styled.span`
  padding-bottom: 2px;
  white-space: pre;
  text-align: ${(props) => props.$side};
  font-weight: ${(props) => (props.$on ? 500 : 400)};
  color: ${(props) => (props.$on ? '#111' : '#a0a3a3')};
  border-bottom: 1px solid #f1f1f6;
`
const BlockFold = styled.i`
  position: absolute;
  left: 50%;
  bottom: 0;
  border: solid transparent;
  border-width: 0 4px 4px;
  border-bottom-color: #111;
`
const PlcWindow = styled.aside`
  position: absolute;
  top: 0;
  right: 0;
  width: 166px;
  height: 198px;
  overflow: hidden;
  color: #fff;
  background: #52606f;
  border: 2px solid #3a3d42;
  border-width: 0 0 2px 2px;
  font-size: 11px;
`
const PlcFace = styled.div`
  width: 190px;
  height: 168px;
  padding: 0 0 0 7px;
`
const Brand = styled.div`
  width: 62px;
  height: 8px;
  font-family: "Liberation Sans", Arial, sans-serif;
  font-size: 13px;
  font-weight: 700;
  line-height: 4px;
  text-align: center;
  background: #009999;
`
const PlcTop = styled.div`
  display: flex;
  justify-content: space-between;
  height: 128px;
  padding-top: 9px;
  font-family: "Open Sans", "Noto Sans", sans-serif;
`
const PowerButton = styled.button`
  display: flex;
  align-items: center;
  justify-content: center;
  width: 23px;
  height: 25px;
  margin: 0 0 2px 1px;
  background: #414f5c;
  border: 2px solid #38444f;
  border-bottom-color: #8fa3b8;
`
const Led = styled.div`
  display: flex;
  align-items: center;
  gap: 7px;
  height: 18px;
  padding-left: 7px;
  font-size: 10px;
  white-space: nowrap;
  &::before {
    content: '';
    width: 11px;
    height: 11px;
    border: 1px solid #777;
    background: ${(props) => props.$color};
  }
`
const PlcButtons = styled.div`
  display: flex;
  flex-direction: column;
  gap: 6px;
  button {
    width: 49px;
    height: 24px;
    color: #fff;
    background: #47535f;
    border: 2px solid #35404a;
    border-color: #35404a #35404a #8093a5 #35404a;
    font-size: 10px;
  }
`
const PlcAddress = styled.div`
  display: flex;
  justify-content: space-between;
  width: 160px;
  padding-left: 6px;
  span:last-child {
    width: 48px;
  }
`
const PlcProject = styled.div`
  height: 28px;
  padding-left: 8px;
  line-height: 31px;
  color: #444;
  background: #cbcbcb;
`
const Watermark = styled.div`
  position: absolute;
  top: 276px;
  left: 2px;
  right: 0;
  font-size: 35px;
  line-height: 50px;
  font-weight: 900;
  text-align: center;
  white-space: nowrap;
  color: rgba(120, 120, 120, 0.34);
  pointer-events: none;
`
